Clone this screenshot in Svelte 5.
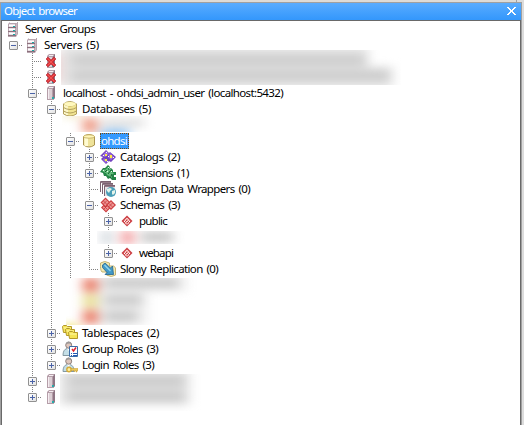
<script>
  const rows = [
    { d: 0, icon: 'group', text: 'Server Groups', w: 70 },
    { d: 1, icon: 'group', text: 'Servers (5)', w: 55, t: '-' },
    { d: 2, icon: 'dead', lines: '' },
    { d: 2, icon: 'dead', lines: '' },
    { d: 2, icon: 'server', text: 'localhost - ohdsi_admin_user (localhost:5432)', w: 220, t: '-' },
    { d: 3, icon: 'dbs', text: 'Databases (5)', w: 69, t: '-', lines: '1' },
    { d: 4, lines: '12' },
    { d: 4, icon: 'db', text: 'ohdsi', w: 26, t: '-', lines: '12', selected: true },
    { d: 5, icon: 'catalogs', text: 'Catalogs (2)', w: 60, t: '+', lines: '123' },
    { d: 5, icon: 'extensions', text: 'Extensions (1)', w: 69, t: '+', lines: '123' },
    { d: 5, icon: 'fdw', text: 'Foreign Data Wrappers (0)', w: 130, lines: '123' },
    { d: 5, icon: 'schemas', text: 'Schemas (3)', w: 60, t: '-', lines: '123' },
    { d: 6, icon: 'schema', text: 'public', w: 28, t: '+', lines: '1234' },
    { d: 6, lines: '1234' },
    { d: 6, icon: 'schema', text: 'webapi', w: 34, t: '+', lines: '1234', last: true },
    { d: 5, icon: 'slony', text: 'Slony Replication (0)', w: 98, lines: '123', last: true },
    { d: 4, lines: '12' },
    { d: 4, lines: '12' },
    { d: 4, lines: '12', last: true },
    { d: 3, icon: 'folders', text: 'Tablespaces (2)', w: 77, t: '+', lines: '1' },
    { d: 3, icon: 'grole', text: 'Group Roles (3)', w: 76, t: '+', lines: '1' },
    { d: 3, icon: 'lrole', text: 'Login Roles (3)', w: 72, t: '+', lines: '1', last: true },
    { d: 2, icon: 'server', t: '+' },
    { d: 2, icon: 'server', t: '+', last: true }
  ];

  function fit(node, width) {
    const natural = node.getBoundingClientRect().width;
    node.style.letterSpacing = `${(width - natural) / node.textContent.length}px`;
  }
</script>

{#snippet tower(x)}
  <path d="M{x} 3l2-2h6v12l-2 2h-6z" fill="#b59ea9" />
  <path d="M{x + 1} 4h4v10h-4z" fill="#dccfd5" />
  <path d="M{x + 1} 4h1v10h-1zM{x + 2} 2h5v1h-5z" fill="#f5edf1" />
  <path d="M{x + 6} 3l2-2v12l-2 2z" fill="#8f7684" />
  <path d="M{x + 5} 12h2v2h-2z" fill="#28aaa9" />
{/snippet}

{#snippet lattice(x, y)}
  <path d="M{x} {y}l5-5 5 5-5 5z" fill="#cb393c" />
  <path d="M{x + 1.5} {y}l3.500-3.500 3.500 3.500-3.500 3.500z" fill="#ee9592" />
  <path d="M{x + 3} {y - 1.5}l3.500 3.500M{x + 6.5} {y - 2}l-4 4" stroke="#c53a3f" stroke-width=".8" />
{/snippet}

{#snippet cylinder(x, y, w, h)}
  <path d="M{x} {y + 2}q{w / 2}-4 {w} 0v{h - 4}q{-w / 2} 4 {-w} 0z" fill="#eee299" stroke="#ab9450" />
  <path d="M{x + 2} {y + 3}v{h - 4}M{x + 3.5} {y + 3}v{h - 4}" stroke="#fffbd2" stroke-width="2" />
  <ellipse cx={x + w / 2} cy={y + 2} rx={w / 2} ry="1.7" fill="#fff6b8" stroke="#c0a95e" stroke-width=".8" />
{/snippet}

{#snippet person()}
  <path d="M1 14.5q0-6 4-7h3q4 1 4 7z" fill="#c5dfe7" stroke="#8499a2" />
  <path d="M5 7l1.6 3L8.4 7z" fill="#fff" />
  <circle cx="6.7" cy="4.2" r="3" fill="#dfc7bd" stroke="#8e807c" />
  <path d="M4 3q0-2.5 2.7-2.5T9.5 3q-2-1-5.5 0z" fill="#9b9897" />
{/snippet}

{#snippet glyph(name)}
  <svg class="icon" width="16" height="16" viewBox="0 0 16 16">
    {#if name === 'group'}
      <path d="M3 3l2-2h8v12l-2 3H3z" fill="#b8a4ae" />
      <path d="M4 3h6v12H4z" fill="#e8dfe4" />
      <path d="M5 1h7v1H5zM4 4h6v1H4zM4 8h6v1H4zM4 12h6v1H4z" fill="#fff" />
      <path d="M3 6h8v1H3zM3 10h8v1H3zM3 14h8v1H3z" fill="#8b707c" />
      <path d="M11 3l1-1v11l-1 2z" fill="#cbbbc3" />
      <path d="M8 5h2v1H8zM8 9h2v1H8zM8 13h2v1H8z" fill="#18a9a6" />
    {:else if name === 'server'}
      {@render tower(4)}
    {:else if name === 'dead'}
      {@render tower(4)}
      <path d="M3 6l2-2 3 3 3-3 2 2-3 3 3 3-2 2-3-3-3 3-2-2 3-3z" fill="#dc3238" stroke="#b02430" stroke-width=".6" />
      <path d="M4.500 5.500l7 7M11.500 5.500l-7 7" stroke="#ee5553" />
    {:else if name === 'dbs'}
      <path d="M1.5 3q6-5 13 0v10q-6.5 4-13 0z" fill="#f2e591" stroke="#b3a05d" />
      <path d="M3 4v9M5 5v9" stroke="#fffcd8" stroke-width="1.5" />
      <path d="M1.5 3q6.500 4 13 0M1.500 6.500q6.500 4 13 0M1.500 10q6.500 4 13 0" fill="none" stroke="#b3a05d" />
      <ellipse cx="8" cy="3" rx="6" ry="2" fill="#fff8bd" />
    {:else if name === 'db'}
      {@render cylinder(2.5, 1.5, 11, 12.5)}
    {:else if name === 'catalogs'}
      <path d="M0 7l6-6 3 3 1-1 6 5-5 5-2-1-3 3-5-5 2-2z" fill="#7343c0" />
      <path d="M6 2l3 3-4 3-3-1zM10 4l4 4-3 3-3-3zM4 9l3 3-1 2-3-3z" fill="#9a6bdc" />
      <path d="M6 3h1v1H6zM3 6h1v1H3zM8 7h1v1H8zM13 8h1v1h-1zM7 12h1v1H7z" fill="#fff" />
      <path d="M5 5h2v2H5zM10 6h2v3h-2zM5 10h2v2H5z" fill="#ffed42" />
    {:else if name === 'extensions'}
      <path d="M0 7l3-4h2l3-3 2 2-1 2 2-1 2 2v2h3v3h-2v2h2v3h-4l-2-2-2 1-2-3H4L3 8z" fill="#238346" />
      <path d="M2 6l2-2 1 1 3-3v3l3-1v3l3 1-2 2v3l-3-2-2-1-1-2H5L4 7z" fill="#62bd7b" />
      <path d="M3 5h1v1H3zM8 2h1v1H8zM7 6h1v1H7zM11 6h1v1h-1zM10 11h1v1h-1z" fill="#e2ffe8" />
      <path d="M5 7l2-2M8 9l3-4M10 13l2-4" stroke="#125c2e" />
    {:else if name === 'fdw'}
      <path d="M.5 11V.5H11M2.500 13V2.500H13M4.500 15V4.500H15" fill="none" stroke="#7c6371" />
      <path d="M5 5h10v10H5z" fill="#e9e2e5" />
      <path d="M1 1h10v1H1zM3 3h10v1H3zM5 5h10v1H5z" fill="#957b89" />
      <circle cx="11" cy="11" r="5" fill="#4a9eb8" />
      <path d="M7 8l3-1 2 1-2 2-1 2-2-2zM12 10l3-1v3l-2 2-1-1z" fill="#e4f4ea" />
    {:else if name === 'schemas'}
      {@render lattice(1, 10.5)}
      {@render lattice(0.5, 5.5)}
      {@render lattice(6, 8)}
    {:else if name === 'schema'}
      <path d="M2.500 8L8 2.500 13.500 8 8 13.500z" fill="#cb3e43" />
      <path d="M4.500 8L8 4.500 11.500 8 8 11.500z" fill="#ee9b98" />
      <path d="M7.500 5h1v1h-1zM6 6.500h1v1H6zM9 6.500h1v1H9zM5 8h1v1H5zM7.500 8h1v1h-1zM10 8h1v1h-1zM6 9.500h1v1H6zM9 9.500h1v1H9zM7.500 10.500h1v1h-1z" fill="#fff" />
      <path d="M7 7h1v1H7zM9 8h1v1H9zM6 8h1v1H6zM8 9h1v1H8z" fill="#c93b40" />
    {:else if name === 'slony'}
      <path d="M.5 2q4-3 9 0v3h4q3 1 2 5v4q-4 3-9 0v-3H2Q0 9 .5 2z" fill="#f4ebb4" stroke="#c4b373" />
      <path d="M2.500 4l2.500-2 5.500 5 2-2 1 8.500H5l2-2-4.500-5z" fill="#4198c6" stroke="#25658f" stroke-width=".8" />
      <path d="M4.500 4l6 6" stroke="#8dd4ee" stroke-width="1.500" />
    {:else if name === 'folders'}
      {#each [[0.5, 1.5], [3.5, 4.5], [6.5, 7.5]] as [x, y]}
        <path d="M{x} {y}l1-1h3l1 1h4v6h-8z" fill="#f5e456" stroke="#b3982a" />
        <path d="M{x + 1} {y + 1.5}h7" stroke="#fff9a8" />
      {/each}
    {:else if name === 'grole'}
      {@render person()}
      <path d="M7.500 5.500h8v10h-8z" fill="#fff" stroke="#3d6da6" />
      <path d="M10 8l1.500 2L14 6.500" stroke="#e0222d" stroke-width="1.500" fill="none" />
      <path d="M9 12h1v1H9zM11 12h4v1h-4zM9 14h1v1H9zM11 14h4v1h-4z" fill="#2359b5" />
    {:else if name === 'lrole'}
      {@render person()}
      <circle cx="7" cy="12.500" r="2.200" fill="#fff1a2" stroke="#d5ac3a" stroke-width="1.400" />
      <path d="M9 11.500h7v2h-1v1.500h-1v-1.500h-1v1h-1v-1H9z" fill="#ecc956" stroke="#c4982f" stroke-width=".5" />
    {/if}
  </svg>
{/snippet}

<div class="window">
  <div class="edge"></div>
  <section class="panel">
    <header>
      <span class="title" use:fit={73}>Object browser</span>
      <svg width="9" height="8" viewBox="0 0 9 8" shape-rendering="crispEdges">
        <path d="M0 0h2v1h1v1h1v1h1V2h1V1h1V0h2v1H8v1H7v1H6v2h1v1h1v1h1v1H7V7H6V6H5V5H4v1H3v1H2v1H0V7h1V6h1V5h1V3H2V2H1V1H0z" fill="#fff" />
      </svg>
    </header>
    <main>
      {#each rows as r}
        <div class="row">
          {#each Array(r.d) as _, i}
            <span
              class="cell"
              class:line={i === r.d - 1 ? i > 0 : (r.lines ?? '').includes(String(i))}
              class:half={i === r.d - 1 && r.last}
              class:branch={i === r.d - 1 && (r.icon || r.t)}
            >
              {#if r.t && i === r.d - 1}
                <span class="toggle" class:plus={r.t === '+'}></span>
              {/if}
            </span>
          {/each}
          <span class="slot">{#if r.icon}{@render glyph(r.icon)}{/if}</span>
          {#if r.text}
            <span class="label" class:selected={r.selected}><span class="words" use:fit={r.w}>{r.text}</span></span>
          {/if}
        </div>
      {/each}
      <svg class="smudges" width="518" height="404" viewBox="2 21 518 404">
        <defs>
          <filter id="soft" x="-30%" y="-100%" width="160%" height="300%" color-interpolation-filters="sRGB"><feGaussianBlur stdDeviation="6 4.500" /></filter>
          <clipPath id="c1"><path d="M61 50h340v35H61z" /></clipPath>
          <clipPath id="c2"><path d="M62 116h100v16H62z" /></clipPath>
          <clipPath id="c3"><path d="M97 231h90v13H97z" /></clipPath>
          <clipPath id="c4"><path d="M66 278h133v47H66z" /></clipPath>
          <clipPath id="c5"><path d="M60 374h145v37H60z" /></clipPath>
        </defs>
        <g clip-path="url(#c1)">
          <path d="M61 50h340v35H61z" fill="#fff" />
          <g filter="url(#soft)"><path d="M61 46h307v20h24v22H61z" fill="#e2e2e2" /><path d="M72 56h294v9H72zM72 71h318v9H72z" fill="#cbcbcb" /><path d="M52 54h7v28h-7z" fill="#f6c5c5" /></g>
        </g>
        <g clip-path="url(#c2)">
          <path d="M62 116h100v16H62z" fill="#fff" />
          <g filter="url(#soft)"><path d="M64 112h18v5H64z" fill="#eee6b5" /><path d="M83 118h14v15H83z" fill="#ee9a84" /><path d="M101 119h43v8h-43z" fill="#dedede" /><path d="M101 130h28v8h-28z" fill="#7abaf5" /></g>
        </g>
        <g clip-path="url(#c3)">
          <path d="M97 231h90v13H97z" fill="#fff" />
          <g filter="url(#soft)"><path d="M101 230h12v15h-12z" fill="#d8dde2" /><path d="M121 230h13v15h-13z" fill="#f4a6a8" /><path d="M141 231h32v12h-32z" fill="#cccccc" /></g>
        </g>
        <g clip-path="url(#c4)">
          <path d="M66 278h133v47H66z" fill="#fff" />
          <g filter="url(#soft)"><path d="M98 274h88v18h-39v33H98z" fill="#eeeeee" /><path d="M83 278h15v14H83zM83 310h15v14H83z" fill="#ea7f6a" /><path d="M83 294h15v14H83z" fill="#e9df98" /><path d="M105 278h73v10h-73zM105 295h37v10h-37zM105 311h32v11h-32z" fill="#cbcbcb" /><path d="M62 325h16v8H62z" fill="#efdf5b" /></g>
        </g>
        <g clip-path="url(#c5)">
          <path d="M60 374h145v37H60z" fill="#fff" />
          <g filter="url(#soft)"><path d="M60 370h129v35H60z" fill="#e0e0e0" /><path d="M69 377h115v9H69zM69 392h115v9H69z" fill="#cacaca" /></g>
        </g>
      </svg>
    </main>
  </section>
</div>

<style>
  :global(body) { margin: 0; background: #dcdcdc; }
  .window { width: 524px; height: 425px; overflow: hidden; background: #dcdcdc; font: 11.5px/16px "Noto Sans", "Open Sans", sans-serif; word-spacing: 1.5px; color: #000; }
  .edge { box-sizing: border-box; height: 2px; width: 517px; background: #dedbd6; border-right: 1px solid #a0a0a0; }
  .panel { box-sizing: border-box; width: 522px; height: 423px; border-top: 1px solid #a0a0a0; border-left: 1px solid #a0a0a0; border-right: 1px solid #a0a0a0; }
  header { box-sizing: border-box; height: 18px; display: flex; align-items: center; justify-content: space-between; padding: 0 5px 1px 3px; background: linear-gradient(#59acff, #3397fc); border-bottom: 1px solid #696969; color: #fff; }
  .title { white-space: nowrap; }
  main { box-sizing: border-box; position: relative; height: 404px; background: #fff; border-left: 1px solid #696969; border-right: 1px solid #696969; padding-left: 2px; }
  .row { display: flex; height: 16px; }
  .cell { flex: none; width: 19px; height: 16px; display: flex; align-items: center; justify-content: center; background-repeat: no-repeat; }
  .line { background-image: repeating-linear-gradient(#808080 0 1px, transparent 1px 2px); background-size: 1px 16px; background-position: 9px 0; }
  .branch { background-image: repeating-linear-gradient(90deg, #808080 0 1px, transparent 1px 2px); background-size: 10px 1px; background-position: 9px 8px; }
  .line.branch { background-image: repeating-linear-gradient(#808080 0 1px, transparent 1px 2px), repeating-linear-gradient(90deg, #808080 0 1px, transparent 1px 2px); background-size: 1px 16px, 10px 1px; background-position: 9px 0, 9px 8px; }
  .line.half { background-size: 1px 9px, 10px 1px; }
  .toggle { box-sizing: border-box; width: 9px; height: 9px; margin-top: 1px; border: 1px solid #919191; border-radius: 1px; background: linear-gradient(#4b63a7, #4b63a7) 1px 3px / 5px 1px no-repeat, linear-gradient(135deg, #fff, #e2e2e2); }
  .toggle.plus { background: linear-gradient(#4b63a7, #4b63a7) 1px 3px / 5px 1px no-repeat, linear-gradient(#4b63a7, #4b63a7) 3px 1px / 1px 5px no-repeat, linear-gradient(135deg, #fff, #e2e2e2); }
  .slot { flex: none; width: 18px; height: 16px; padding-left: 1px; }
  .icon { display: block; }
  .label { box-sizing: border-box; height: 16px; padding: 0 2px; white-space: nowrap; }
  .words { display: inline-block; }
  .selected { margin-left: 1px; padding-left: 1px; background: #3399ff; color: #fff; outline: 1px dotted #7a4a10; outline-offset: -1px; }
  .smudges { position: absolute; left: 0; top: 0; pointer-events: none; }
</style>
